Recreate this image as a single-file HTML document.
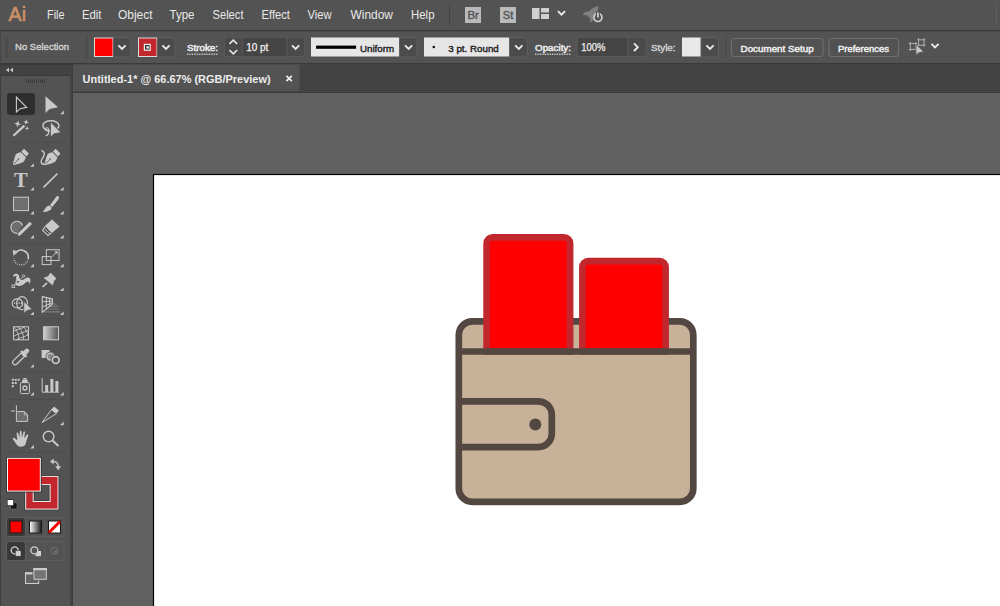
<!DOCTYPE html>
<html>
<head>
<meta charset="utf-8">
<title>Untitled-1* @ 66.67% (RGB/Preview)</title>
<style>
html,body{margin:0;padding:0;}
body{width:1000px;height:606px;overflow:hidden;background:#535353;font-family:"Liberation Sans",sans-serif;position:relative;}
svg{position:absolute;display:block;}
</style>
</head>
<body>
<svg id="artwork" width="1000" height="606" viewBox="0 0 1000 606" style="left:0;top:0">
<rect x="73" y="93" width="927" height="513" fill="#606060"/>
<rect x="153.5" y="174.5" width="900" height="500" fill="#ffffff" stroke="#000" stroke-width="1.2"/>
<rect x="458.8" y="321.4" width="234.5" height="180.4" rx="13.4" fill="#c7b299" stroke="#534741" stroke-width="6.67"/>
<path d="M486.6 351.5 V243.4 a6 6 0 0 1 6 -6 H564.1 a6 6 0 0 1 6 6 V351.5 Z" fill="#ff0000" stroke="#c1272d" stroke-width="6.67"/>
<path d="M582.4 351.5 V267.2 a6 6 0 0 1 6 -6 H659.6 a6 6 0 0 1 6 6 V351.5 Z" fill="#ff0000" stroke="#c1272d" stroke-width="6.67"/>
<path d="M458.7 351.5 H693.3" stroke="#534741" stroke-width="6.67" fill="none"/>
<path d="M458.7 401.3 H538.4 a13.4 13.4 0 0 1 13.4 13.4 V433.7 a13.4 13.4 0 0 1 -13.4 13.4 H458.7" stroke="#534741" stroke-width="6.67" fill="none"/>
<circle cx="535.3" cy="424.5" r="6" fill="#534741"/>
</svg>
<svg id="top" width="1000" height="94" viewBox="0 0 1000 94" style="left:0;top:0" font-family="Liberation Sans, sans-serif">
<defs>
<path id="chev" d="M-3.6 -1.9 L0 1.7 L3.6 -1.9" fill="none" stroke="#ececec" stroke-width="1.8"/>
</defs>
<!-- menu bar -->
<rect x="0" y="0" width="1000" height="30" fill="#535353"/>
<text x="8.6" y="21" font-size="20.5" fill="#ca9067" stroke="#ca9067" stroke-width="0.7" textLength="17.4" lengthAdjust="spacingAndGlyphs">Ai</text>
<g font-size="13" fill="#e8e8e8">
<text x="47" y="19" textLength="17.5" lengthAdjust="spacingAndGlyphs">File</text>
<text x="82" y="19" textLength="19.5" lengthAdjust="spacingAndGlyphs">Edit</text>
<text x="118" y="19" textLength="34.5" lengthAdjust="spacingAndGlyphs">Object</text>
<text x="169.5" y="19" textLength="25" lengthAdjust="spacingAndGlyphs">Type</text>
<text x="212.5" y="19" textLength="31" lengthAdjust="spacingAndGlyphs">Select</text>
<text x="261.5" y="19" textLength="28.5" lengthAdjust="spacingAndGlyphs">Effect</text>
<text x="307.5" y="19" textLength="24" lengthAdjust="spacingAndGlyphs">View</text>
<text x="350.5" y="19" textLength="42.5" lengthAdjust="spacingAndGlyphs">Window</text>
<text x="411" y="19" textLength="23.5" lengthAdjust="spacingAndGlyphs">Help</text>
</g>
<rect x="449" y="5.5" width="1" height="19" fill="#454545"/>
<rect x="996" y="5.5" width="1" height="19" fill="#606060"/>
<!-- Br / St -->
<rect x="465" y="7" width="16" height="16" fill="#bababa"/>
<text x="467.4" y="19.2" font-size="11" fill="#555" stroke="#555" stroke-width="0.4" textLength="11.4" lengthAdjust="spacingAndGlyphs">Br</text>
<rect x="500" y="7" width="16" height="16" fill="#bababa"/>
<text x="502.8" y="19.2" font-size="11" fill="#555" stroke="#555" stroke-width="0.4" textLength="10.4" lengthAdjust="spacingAndGlyphs">St</text>
<!-- layout icon -->
<rect x="532" y="8" width="7.5" height="11" fill="#d0d0d0"/><rect x="541" y="8" width="8" height="4.5" fill="#d0d0d0"/><rect x="541" y="14" width="8" height="5" fill="#d0d0d0"/>
<use href="#chev" x="561.5" y="13"/>
<!-- rocket -->
<g>
<path d="M598.4 6.2 C594.6 6.4 591.2 8.6 589 11.6 L585.2 11.8 L582.4 15 L586.6 15.2 L590.6 19 L589.6 22.8 L593 20.6 L593.4 17.4 C596.4 14.8 598.4 10.6 598.4 6.2 Z" fill="#808080"/>
<circle cx="597.9" cy="17.5" r="4" fill="#535353" stroke="#d2d2d2" stroke-width="1.7"/>
<rect x="596" y="11.4" width="3.8" height="4.4" fill="#535353"/>
<path d="M597.9 12.4 L597.9 17.6" stroke="#d2d2d2" stroke-width="1.7"/>
</g>
<!-- control bar -->
<rect x="0" y="30" width="1000" height="1.5" fill="#3a3a3a"/>
<rect x="0" y="31.5" width="1000" height="31.5" fill="#535353"/>
<rect x="0" y="63" width="1000" height="1.5" fill="#3a3a3a"/>
<rect x="0" y="31" width="1" height="32" fill="#454545"/>
<g fill="#444444"><rect x="5" y="38" width="3" height="1"/><rect x="5" y="40" width="3" height="1"/><rect x="5" y="42" width="3" height="1"/><rect x="5" y="44" width="3" height="1"/><rect x="5" y="46" width="3" height="1"/><rect x="5" y="48" width="3" height="1"/><rect x="5" y="50" width="3" height="1"/><rect x="5" y="52" width="3" height="1"/><rect x="5" y="54" width="3" height="1"/><rect x="5" y="56" width="3" height="1"/></g>
<g font-size="9.6" font-weight="bold" fill="#e2e2e2">
<text x="15" y="49.7" textLength="54" lengthAdjust="spacingAndGlyphs" font-weight="normal" fill="#d8d8d8" stroke="#d8d8d8" stroke-width="0.3">No Selection</text>
<text x="187" y="51.3" textLength="31" lengthAdjust="spacingAndGlyphs" font-weight="normal" fill="#ececec" stroke="#ececec" stroke-width="0.5">Stroke:</text>
<text x="535" y="51.2" textLength="36" lengthAdjust="spacingAndGlyphs" font-weight="normal" fill="#ececec" stroke="#ececec" stroke-width="0.5">Opacity:</text>
<text x="651" y="51.2" textLength="24.5" lengthAdjust="spacingAndGlyphs" font-weight="normal" fill="#d6d6d6" stroke="#d6d6d6" stroke-width="0.35">Style:</text>
</g>
<path d="M187 54.2 L218 54.2 M535 54.2 L571 54.2" stroke="#cfcfcf" stroke-width="1.5" stroke-dasharray="0.9 0.8"/>
<rect x="86.5" y="35" width="1" height="24" fill="#484848"/>
<rect x="725.5" y="35" width="1" height="24" fill="#484848"/>
<!-- fill swatch -->
<rect x="94.5" y="38" width="18.5" height="18.5" fill="#ff0000" stroke="#dcdcdc" stroke-width="1"/>
<path d="M113.5 37.5 L128 37.5 Q131 37.5 131 40.5 L131 54 Q131 57 128 57 L113.5 57 Z" fill="#4b4b4b" stroke="#5f5f5f" stroke-width="1"/>
<use href="#chev" x="122" y="47.2"/>
<!-- stroke swatch -->
<rect x="138.5" y="38" width="18.5" height="18.5" fill="#c1272d" stroke="#dcdcdc" stroke-width="1"/>
<rect x="143.8" y="43.8" width="7" height="7" fill="#f2f2f2"/>
<rect x="145" y="45" width="4.6" height="4.6" fill="#2e2e2e"/>
<rect x="146.4" y="46.2" width="2.4" height="2.4" fill="#f2f2f2"/>
<path d="M157.5 37.5 L172 37.5 Q175 37.5 175 40.5 L175 54 Q175 57 172 57 L157.5 57 Z" fill="#4b4b4b" stroke="#5f5f5f" stroke-width="1"/>
<use href="#chev" x="166" y="47.2"/>
<!-- stroke weight -->
<rect x="224.4" y="37.2" width="80.2" height="19.6" rx="3" fill="#535353" stroke="#5a5a5a" stroke-width="1"/>
<path d="M241.6 37.8 L227.2 37.8 Q225 37.8 225 40 L225 54 Q225 56.1 227.2 56.1 L241.6 56.1 Z" fill="#4a4a4a"/>
<path d="M229.4 43.9 L233.3 40.1 L237.2 43.9 M229.4 50 L233.3 53.8 L237.2 50" fill="none" stroke="#e6e6e6" stroke-width="1.6"/>
<rect x="243.2" y="37.8" width="42.8" height="18.3" fill="#454545"/>
<text x="246.2" y="50.8" font-size="10" fill="#f0f0f0" stroke="#f0f0f0" stroke-width="0.25" textLength="22.2" lengthAdjust="spacingAndGlyphs">10 pt</text>
<path d="M287.7 37.8 L302 37.8 Q304.1 37.8 304.1 40 L304.1 54 Q304.1 56.1 302 56.1 L287.7 56.1 Z" fill="#4a4a4a"/>
<use href="#chev" x="295.6" y="47.2"/>
<!-- profile -->
<rect x="311" y="37.5" width="88.5" height="19" fill="#e6e6e6"/>
<rect x="316.1" y="45.6" width="40" height="3.2" fill="#000"/>
<text x="360" y="51.6" font-size="9.6" fill="#1e1e1e" textLength="34" lengthAdjust="spacingAndGlyphs" stroke="#1e1e1e" stroke-width="0.4">Uniform</text>
<path d="M399.5 37.5 L414 37.5 Q417 37.5 417 40.5 L417 54 Q417 57 414 57 L399.5 57 Z" fill="#4b4b4b" stroke="#5f5f5f" stroke-width="1"/>
<use href="#chev" x="408.6" y="47.2"/>
<!-- brush -->
<rect x="424" y="37.5" width="85.5" height="19" fill="#e6e6e6"/>
<circle cx="433.8" cy="47" r="1.3" fill="#111"/>
<text x="448.3" y="51.6" font-size="9.6" fill="#1e1e1e" textLength="50.5" lengthAdjust="spacingAndGlyphs" stroke="#1e1e1e" stroke-width="0.4">3 pt. Round</text>
<path d="M509.5 37.5 L524.5 37.5 Q527.5 37.5 527.5 40.5 L527.5 54 Q527.5 57 524.5 57 L509.5 57 Z" fill="#4b4b4b" stroke="#5f5f5f" stroke-width="1"/>
<use href="#chev" x="518.8" y="47.2"/>
<!-- opacity -->
<rect x="577" y="37.2" width="69" height="19.6" rx="3" fill="#535353" stroke="#5a5a5a" stroke-width="1"/>
<path d="M627.2 37.8 L580 37.8 Q577.8 37.8 577.8 40 L577.8 54 Q577.8 56.1 580 56.1 L627.2 56.1 Z" fill="#454545"/>
<text x="581.3" y="50.9" font-size="10.4" fill="#f0f0f0" stroke="#f0f0f0" stroke-width="0.25" textLength="24.2" lengthAdjust="spacingAndGlyphs">100%</text>
<path d="M628.8 37.8 L643 37.8 Q645.3 37.8 645.3 40 L645.3 54 Q645.3 56.1 643 56.1 L628.8 56.1 Z" fill="#4a4a4a"/>
<path d="M634 43.4 L637.8 47.2 L634 51" fill="none" stroke="#ececec" stroke-width="1.9"/>
<!-- style -->
<rect x="682" y="37.5" width="19" height="19" fill="#e8e8e8"/>
<path d="M701 37.5 L715.5 37.5 Q718.5 37.5 718.5 40.5 L718.5 54 Q718.5 57 715.5 57 L701 57 Z" fill="#4b4b4b" stroke="#5f5f5f" stroke-width="1"/>
<use href="#chev" x="710" y="47.2"/>
<!-- buttons -->
<rect x="731.5" y="38.5" width="91.5" height="18" rx="3" fill="#525252" stroke="#6e6e6e" stroke-width="1.2"/>
<text x="740.6" y="51.6" font-size="9.6" fill="#f0f0f0" textLength="73" lengthAdjust="spacingAndGlyphs" stroke="#f0f0f0" stroke-width="0.45">Document Setup</text>
<rect x="829" y="38.5" width="69.5" height="18" rx="3" fill="#525252" stroke="#6e6e6e" stroke-width="1.2"/>
<text x="838" y="51.6" font-size="9.6" fill="#f0f0f0" textLength="51" lengthAdjust="spacingAndGlyphs" stroke="#f0f0f0" stroke-width="0.45">Preferences</text>
<!-- align icon -->
<g fill="none" stroke="#b0b0b0" stroke-width="1">
<path d="M910.3 42 L910.3 51 M915.8 42 L915.8 51 M908.8 43.6 L917.2 43.6 M908.8 49.4 L917.2 49.4"/>
<path d="M918.6 38.2 L918.6 46.8 M924 38.2 L924 46.8 M917 39.8 L925.4 39.8 M917 45.2 L925.4 45.2"/>
</g>
<path d="M916 44.4 L916 55.2 L918.9 52.7 L923.8 51.7 Z" fill="#c8c8c8" stroke="#535353" stroke-width="0.8"/>
<use href="#chev" x="935" y="45.8"/>
<!-- tab bar -->
<rect x="73" y="64.5" width="927" height="27" fill="#424242"/>
<rect x="73" y="64.5" width="226.5" height="27" fill="#535353"/>
<rect x="73" y="91.7" width="927" height="1.3" fill="#3b3b3b"/>
<text x="82.6" y="83" font-size="11" font-weight="bold" fill="#ededed" textLength="188" lengthAdjust="spacingAndGlyphs">Untitled-1* @ 66.67% (RGB/Preview)</text>
<path d="M286.4 75.8 L291.8 81.2 M291.8 75.8 L286.4 81.2" stroke="#ededed" stroke-width="1.7"/>
</svg>

<svg id="tools" width="73" height="606" viewBox="0 0 73 606" style="left:0;top:0">
<defs>
<linearGradient id="gr1" x1="0" x2="1" y1="0" y2="0"><stop offset="0" stop-color="#d0d0d0"/><stop offset="1" stop-color="#555"/></linearGradient>
<linearGradient id="gr2" x1="0" x2="1" y1="0" y2="0"><stop offset="0" stop-color="#ffffff"/><stop offset="1" stop-color="#1a1a1a"/></linearGradient>
<path id="fly" d="M0 0 L0 3.6 L-3.6 3.6 Z" fill="#c9c9c9"/>
<g id="pen">
  <path d="M13 164.2 C13 163 15 156 15.8 154.6 C16.6 153.4 19 152.6 20.8 152.3 L25.8 157.3 C25.4 159 24.4 161 23.4 161.8 C22 162.8 16 164.8 14.4 165 C13.4 165.1 13 164.8 13 164.2 Z" fill="#c9c9c9"/>
  <path d="M13.6 164.3 L18.2 159.4" stroke="#535353" stroke-width="0.8" fill="none"/>
  <circle cx="18.5" cy="159.1" r="0.8" fill="#535353"/>
  <path d="M21.4 151.6 L24 148.7 L28.9 153.4 L26.3 156.4 Z" fill="#c9c9c9"/>
</g>
</defs>
<!-- header -->
<rect x="1" y="65" width="69" height="10" fill="#424242"/>
<rect x="0" y="63" width="73" height="2" fill="#3a3a3a"/>
<rect x="1" y="75" width="69" height="1" fill="#3a3a3a"/>
<path d="M9 67.8 L9 72.2 L6 70 Z M13 67.8 L13 72.2 L10 70 Z" fill="#d0d0d0"/>
<g fill="#3d3d3d"><rect x="26" y="79.5" width="1" height="3.5"/><rect x="28" y="79.5" width="1" height="3.5"/><rect x="30" y="79.5" width="1" height="3.5"/><rect x="32" y="79.5" width="1" height="3.5"/><rect x="34" y="79.5" width="1" height="3.5"/><rect x="36" y="79.5" width="1" height="3.5"/><rect x="38" y="79.5" width="1" height="3.5"/><rect x="40" y="79.5" width="1" height="3.5"/><rect x="42" y="79.5" width="1" height="3.5"/><rect x="44" y="79.5" width="1" height="3.5"/></g>
<!-- separators -->
<g fill="#4c4c4c">
<rect x="6" y="142" width="60" height="1"/><rect x="6" y="243" width="60" height="1"/><rect x="6" y="318" width="60" height="1"/><rect x="6" y="371" width="60" height="1"/><rect x="6" y="399" width="60" height="1"/><rect x="6" y="452" width="60" height="1"/>
</g>
<!-- selection tool (active) -->
<rect x="7" y="93" width="28" height="22" rx="3" fill="#2e2e2e"/>
<path d="M16.4 97.2 L16.4 112 L20.2 108.7 L26.6 107.4 Z" fill="none" stroke="#cfcfcf" stroke-width="1.1" stroke-linejoin="miter"/>
<!-- direct selection -->
<path d="M45.5 96.2 L45.5 113 L49.6 108.9 L58 107.3 Z" fill="#c9c9c9"/>
<use href="#fly" x="63.8" y="110.6"/>
<!-- magic wand -->
<path d="M13.4 135.8 L24.4 125.6" stroke="#c9c9c9" stroke-width="2.2" fill="none"/>
<path d="M18.3 120.4 L18.8 123.2 L21.2 124.5 L18.4 125.0 L17.1 127.4 L16.6 124.6 L14.2 123.3 L17.0 122.8 Z" fill="#c9c9c9"/>
<path d="M26.6 119.3 L27.0 121.6 L29.0 122.7 L26.7 123.1 L25.6 125.1 L25.2 122.8 L23.2 121.7 L25.5 121.3 Z" fill="#c9c9c9"/>
<path d="M27.5 126.2 L27.8 127.9 L29.3 128.8 L27.6 129.1 L26.7 130.6 L26.4 128.9 L24.9 128.0 L26.6 127.7 Z" fill="#c9c9c9"/>
<!-- lasso -->
<path d="M50 130.7 C45.5 130.5 42.9 127.8 42.9 125.4 C42.9 122.6 46.5 120.8 50.8 120.8 C55.2 120.8 58.9 122.8 58.9 125.4 C58.9 126.6 58.4 127.6 57.6 128.4" fill="none" stroke="#c9c9c9" stroke-width="1.5"/>
<circle cx="47" cy="129.3" r="1.6" fill="none" stroke="#c9c9c9" stroke-width="1.1"/>
<path d="M48.5 130.4 C49.2 132.8 48.2 135 45.6 135.8" fill="none" stroke="#c9c9c9" stroke-width="1.3"/>
<path d="M50.5 122 L50.5 137.2 L54 133.7 L61 132.6 Z" fill="#c9c9c9" stroke="#535353" stroke-width="0.7"/>
<!-- pen -->
<use href="#pen"/>
<use href="#fly" x="33.9" y="163.2"/>
<!-- curvature -->
<use href="#pen" x="31.6"/>
<path d="M41.4 150.4 C44.8 151.6 44.9 154 43.4 156.6 C41.8 159.2 40.2 161.2 41.5 163 C42.4 164.3 44 164.4 45.2 164" fill="none" stroke="#c9c9c9" stroke-width="1.4"/>
<!-- type -->
<text x="14" y="186.9" font-family="Liberation Serif, serif" font-weight="bold" font-size="21" fill="#c9c9c9" textLength="13.7" lengthAdjust="spacingAndGlyphs">T</text>
<use href="#fly" x="33.9" y="187"/>
<!-- line -->
<path d="M43.5 187.4 L57.4 173.6" stroke="#c9c9c9" stroke-width="1.5"/>
<use href="#fly" x="63.6" y="187"/>
<!-- rectangle -->
<rect x="13.5" y="197.2" width="15" height="13.4" fill="#6e6e6e" stroke="#c9c9c9" stroke-width="1"/>
<use href="#fly" x="33.9" y="210.8"/>
<!-- brush -->
<path d="M58.2 196.2 C59.4 196.6 59.2 198 58.6 199 L52.4 207 L50 205.2 L56 197 C56.6 196.3 57.4 195.9 58.2 196.2 Z" fill="#c9c9c9"/>
<path d="M49.3 205.6 L51.8 207.6 C51.6 210.5 47.5 212.3 42.6 211.8 C45 210.6 45.2 206.2 49.3 205.6 Z" fill="#c9c9c9"/>
<use href="#fly" x="63.6" y="210.8"/>
<!-- shaper -->
<path d="M17.5 233.3 A6 6 0 1 1 22.6 225.5" fill="#6e6e6e" stroke="#c9c9c9" stroke-width="1.1"/>
<path d="M29.8 221.8 L32 224 L20.4 235.2 L17.8 236 L18.3 233 Z" fill="#c9c9c9"/>
<use href="#fly" x="33.9" y="234.8"/>
<!-- eraser -->
<path d="M52 219.4 L59.6 226.5 L51.8 233 L44.8 226 Z" fill="#c9c9c9"/>
<path d="M45 226.5 L42.6 230.4 L48 235.5 L51.4 232.8" fill="none" stroke="#c9c9c9" stroke-width="1.1"/>
<path d="M44.5 228.6 L49.6 233.6" fill="none" stroke="#c9c9c9" stroke-width="0.9"/>
<use href="#fly" x="63.6" y="234.8"/>
<!-- rotate -->
<path d="M15.6 252.6 A7.3 7.3 0 0 1 28.1 259.2" fill="none" stroke="#c9c9c9" stroke-width="1.6"/>
<path d="M12.8 249.9 L18.6 251.4 L13.3 255.8 Z" fill="#c9c9c9"/>
<path d="M27.6 260.8 A7.3 7.3 0 0 1 13.8 258.6" fill="none" stroke="#c9c9c9" stroke-width="1.4" stroke-dasharray="1 1.25"/>
<use href="#fly" x="33.9" y="263.6"/>
<!-- scale -->
<rect x="46.3" y="249.7" width="12.8" height="10.8" fill="none" stroke="#c9c9c9" stroke-width="1"/>
<rect x="42.2" y="256.6" width="8.8" height="8" fill="none" stroke="#c9c9c9" stroke-width="1"/>
<path d="M52.4 256.4 L57 251.8" stroke="#c9c9c9" stroke-width="1"/>
<path d="M54.2 251.2 L57.6 251.2 L57.6 254.6 Z" fill="#c9c9c9"/>
<use href="#fly" x="63.6" y="263.6"/>
<!-- puppet warp -->
<path d="M14 276 C14 274.2 15.4 273.5 16.6 273.7 C18.4 274 19.2 275.6 19.4 277.4 C19.6 279.2 20.4 280.2 22 280 C24 279.6 25.6 277.4 27.8 277.4 C29.8 277.4 30.6 279 30.4 280.8 C30.3 282 30 283.2 29.6 284 C29.2 282.4 28.6 281.2 27.4 281.4 C25.6 281.8 24 284.8 21.4 285.6 C19.6 286.1 17.6 286 16.4 285.2 C14.8 284 15.2 281.6 16.4 280 C16.2 278.6 15.8 277 14 276 Z" fill="#c9c9c9"/>
<path d="M14.2 278.6 L16 276.5" stroke="#535353" stroke-width="1.5" stroke-linecap="round" fill="none"/>
<path d="M14 276 C14 274.2 15.4 273.5 16.6 273.7" stroke="#c9c9c9" stroke-width="1.2" fill="none" transform="translate(-0.4 0.6)"/>
<path d="M13.6 286.2 L18 281.8 L23.5 276.2" stroke="#c9c9c9" stroke-width="0.8" fill="none"/>
<circle cx="18" cy="281.8" r="1.5" fill="#535353" stroke="#c9c9c9" stroke-width="0.9"/>
<circle cx="23.6" cy="276" r="1.2" fill="#535353" stroke="#c9c9c9" stroke-width="0.8"/>
<rect x="12.1" y="285" width="2.6" height="2.6" fill="#535353" stroke="#c9c9c9" stroke-width="0.9"/>
<use href="#fly" x="33.9" y="287.4"/>
<!-- pin -->
<path d="M50.6 273 L56.1 278.5 L53.9 280.7 C53.6 282.2 53.2 283.6 52.6 285.1 L43.9 277.8 C45.4 277.5 46.7 277.2 48 276.5 Z" fill="#c9c9c9" stroke="#c9c9c9" stroke-width="0.5" stroke-linejoin="round"/>
<path d="M47 282.8 L42.5 287" stroke="#c9c9c9" stroke-width="1.7"/>
<use href="#fly" x="63.6" y="287.4"/>
<!-- shape builder -->
<ellipse cx="17.4" cy="303.4" rx="5.3" ry="4.5" fill="none" stroke="#c9c9c9" stroke-width="1.1"/>
<ellipse cx="22.1" cy="303.2" rx="5.4" ry="6.6" fill="none" stroke="#c9c9c9" stroke-width="1.1"/>
<g fill="#c9c9c9"><rect x="14" y="302.4" width="1.1" height="1.6"/><rect x="16.3" y="302.4" width="1.1" height="1.6"/><rect x="18.6" y="302.4" width="1.1" height="1.6"/><rect x="20.9" y="302.4" width="1.1" height="1.6"/></g>
<path d="M23.9 301.4 L23.9 313.2 L27 310.4 L32 309.3 Z" fill="#c9c9c9" stroke="#535353" stroke-width="0.6"/>
<use href="#fly" x="33.9" y="311.4"/>
<!-- perspective grid -->
<path d="M49.6 306.4 L58.2 306.4 M47 309 L59 309 M44 311.8 L60.2 311.8" stroke="#7c7c7c" stroke-width="1.2"/>
<path d="M52.4 304 L56.6 304" stroke="#777" stroke-width="1.1"/>
<path d="M42.2 296.6 L52.4 298.9 L52.4 304 L42.2 312.4 Z" fill="#535353" stroke="#c9c9c9" stroke-width="1.1" stroke-linejoin="round"/>
<path d="M42.2 301.8 L52.4 300.9 M42.2 307.2 L52.4 302.6 M46.3 297.5 L46.3 309 M49.6 298.3 L49.6 306.3" stroke="#c9c9c9" stroke-width="1" fill="none"/>
<use href="#fly" x="63.6" y="311.4"/>
<!-- mesh -->
<rect x="13.5" y="326.8" width="15" height="13" fill="none" stroke="#c9c9c9" stroke-width="1"/>
<path d="M13.5 331.5 C17 328.5 21 329.5 24.5 326.8 M13.5 336.5 C18 333.5 24 332.5 28.5 330 M16.5 339.8 C20 337.5 25 337 28.5 334.5 M17.5 326.8 C21 329 24 334 23.5 339.8 M14 327.5 C17 330 19.5 335 18.5 339.8 M23.5 327 C26 329 27.5 333 28 336" fill="none" stroke="#c9c9c9" stroke-width="0.9"/>
<!-- gradient -->
<rect x="43.5" y="326.8" width="15" height="13" fill="url(#gr1)" stroke="#c9c9c9" stroke-width="1"/>
<!-- eyedropper -->
<path d="M13.5 364.3 C12.1 363.4 12.4 361.6 13.4 360.6 L21.4 352.8 L24.8 356.2 L16.8 364 C15.8 365 14.5 365.1 13.5 364.3 Z" fill="none" stroke="#c9c9c9" stroke-width="1.3"/>
<path d="M20.2 351.8 L25.8 357.4 L27.3 355.9 L21.7 350.3 Z" fill="#c9c9c9"/>
<path d="M23.8 353.8 L26.9 350.9" stroke="#c9c9c9" stroke-width="4.6" stroke-linecap="round"/>
<use href="#fly" x="33.9" y="364"/>
<!-- blend -->
<rect x="41.6" y="350" width="8" height="8" fill="#c9c9c9"/>
<circle cx="50.4" cy="356.6" r="4.9" fill="#535353"/>
<circle cx="50.4" cy="356.6" r="3.5" fill="#8a8a8a" stroke="#c9c9c9" stroke-width="1.4"/>
<circle cx="55.7" cy="360" r="5" fill="#535353"/>
<circle cx="55.7" cy="360" r="3.4" fill="#535353" stroke="#c9c9c9" stroke-width="1.7"/>
<!-- symbol sprayer -->
<rect x="20.4" y="382.6" width="9" height="11" rx="1" fill="none" stroke="#c9c9c9" stroke-width="1"/>
<path d="M22.6 382.4 L22.6 380 L27.2 380 L27.2 382.4 M23.6 379.6 L23.6 378.4 L26.2 378.4 L26.2 379.6" fill="#c9c9c9" stroke="#c9c9c9" stroke-width="0.8"/>
<circle cx="24.9" cy="388" r="2" fill="none" stroke="#c9c9c9" stroke-width="1.3"/>
<g fill="#c9c9c9"><rect x="11.8" y="378.8" width="2" height="2"/><rect x="14.7" y="378.8" width="2" height="2"/><rect x="17.6" y="378.8" width="2" height="2"/><rect x="11.8" y="382" width="2" height="2"/><rect x="14.7" y="382" width="2" height="2"/><rect x="11.8" y="385.2" width="2" height="2"/></g>
<use href="#fly" x="33.9" y="392"/>
<!-- graph -->
<path d="M42.2 378.2 L42.2 392.2 L59 392.2" fill="none" stroke="#c9c9c9" stroke-width="1"/>
<rect x="45.2" y="385" width="3" height="7" fill="#c9c9c9"/><rect x="50.4" y="379" width="3" height="13" fill="#c9c9c9"/><rect x="55.4" y="381" width="3" height="11" fill="#c9c9c9"/>
<use href="#fly" x="63.6" y="392"/>
<!-- artboard -->
<path d="M16.4 411.6 L24.4 411.6 L27.6 414.8 L27.6 421.4 L16.4 421.4 Z" fill="#6e6e6e" stroke="#c9c9c9" stroke-width="1"/>
<path d="M24.4 411.6 L24.4 414.8 L27.6 414.8" fill="none" stroke="#c9c9c9" stroke-width="0.8"/>
<path d="M16.4 405.4 L16.4 411 M10.8 411 L15 411" stroke="#c9c9c9" stroke-width="1"/>
<!-- slice -->
<path d="M42 422.6 L51.4 409.6 L56.4 413.6 Z" fill="none" stroke="#c9c9c9" stroke-width="1"/>
<path d="M51.4 409.6 L54 406.4 L59 410.4 L56.4 413.6 Z" fill="#c9c9c9"/>
<use href="#fly" x="63.6" y="421.6"/>
<!-- hand -->
<path d="M18 446 C16 444 14.6 441.4 13 439.2 C12.4 438 13.6 437.2 14.6 438 L17.4 440.4 L16.6 433.4 C16.5 432.2 18 432 18.3 433.2 L19.4 438 L19.8 431.6 C19.9 430.4 21.5 430.4 21.6 431.6 L21.8 438 L23.4 432.2 C23.8 431 25.2 431.4 25 432.6 L24.2 438.6 L26.6 435 C27.4 434 28.6 434.8 28.2 435.8 C27 438.6 26.4 441.6 25.6 444 C25 445.4 24 446.4 22.4 446.6 C20.6 446.8 19 446.8 18 446 Z" fill="#c9c9c9"/>
<use href="#fly" x="33.9" y="444.8"/>
<!-- zoom -->
<circle cx="48.6" cy="436.6" r="5.3" fill="none" stroke="#c9c9c9" stroke-width="1.4"/>
<path d="M52.6 440.6 L58.4 446" stroke="#c9c9c9" stroke-width="2"/>
<!-- fill/stroke -->
<rect x="24.5" y="475.2" width="34.7" height="35.1" fill="#2f2f2f"/>
<rect x="25.2" y="475.9" width="33.3" height="33.7" fill="#f0f0f0"/>
<rect x="26.2" y="476.9" width="31.3" height="31.7" fill="#c1272d"/>
<rect x="32.7" y="484.1" width="17.9" height="17.9" fill="#f0f0f0"/>
<rect x="33.7" y="485.1" width="15.9" height="15.9" fill="#3a3a3a"/>
<rect x="34.5" y="485.9" width="14.3" height="14.3" fill="#535353"/>
<rect x="6.2" y="457" width="35.4" height="35.4" fill="#2f2f2f"/>
<rect x="7" y="457.8" width="33.8" height="33.8" fill="#f4f4f4"/>
<rect x="8" y="458.8" width="31.8" height="31.8" fill="#ff0000"/>
<!-- swap -->
<path d="M52.6 461.5 C56.6 461.3 58.2 463.2 58.2 467" fill="none" stroke="#c6c6c6" stroke-width="1.5"/>
<path d="M50 461.4 L53.7 458.4 L53.7 464.4 Z M58.2 470.2 L55.2 466.2 L61.2 466.2 Z" fill="#c6c6c6"/>
<!-- default -->
<rect x="10.4" y="502.6" width="6.8" height="6.6" fill="#777"/>
<rect x="10.9" y="503.1" width="5.8" height="5.6" fill="#161616"/>
<rect x="6.9" y="499.3" width="7" height="6.6" fill="#2a2a2a"/>
<rect x="7.6" y="500" width="5.6" height="5.2" fill="#ffffff"/>
<!-- color mode row -->
<rect x="6.5" y="517.5" width="57.5" height="19" rx="2" fill="none" stroke="#5e5e5e" stroke-width="1"/>
<rect x="7" y="518" width="18" height="18" rx="2" fill="#3a3a3a"/>
<path d="M25.5 518 L25.5 536 M45 518 L45 536" stroke="#5e5e5e" stroke-width="1"/>
<rect x="10" y="521" width="12" height="12" fill="#ff0000" stroke="#1a1a1a" stroke-width="1"/>
<rect x="29.5" y="521" width="12" height="12" fill="url(#gr2)" stroke="#1a1a1a" stroke-width="1"/>
<rect x="48.5" y="521" width="12" height="12" fill="#ffffff" stroke="#1a1a1a" stroke-width="1"/>
<path d="M49 532.5 L60 521.5" stroke="#ff0000" stroke-width="3"/>
<!-- draw mode row -->
<rect x="6.5" y="541.5" width="57.5" height="19" rx="2" fill="none" stroke="#5e5e5e" stroke-width="1"/>
<rect x="7" y="542" width="18" height="18" rx="2" fill="#383838"/>
<path d="M25.5 542 L25.5 560 M45 542 L45 560" stroke="#5e5e5e" stroke-width="1"/>
<circle cx="14.7" cy="550.4" r="3.5" fill="#383838" stroke="#d0d0d0" stroke-width="1.4"/>
<rect x="15.4" y="550.8" width="5.6" height="5.4" fill="#d0d0d0" stroke="#383838" stroke-width="0.5"/>
<rect x="35.6" y="551" width="5.4" height="5.2" fill="#d0d0d0"/>
<circle cx="34.4" cy="550.4" r="3.5" fill="#535353" stroke="#d0d0d0" stroke-width="1.4"/>
<circle cx="54.4" cy="550.7" r="3.3" fill="none" stroke="#6c6c6c" stroke-width="1.3"/>
<circle cx="55.4" cy="551.5" r="1.5" fill="#6c6c6c"/>
<!-- screen mode -->
<rect x="25.5" y="572.9" width="13.2" height="10.6" fill="#646464" stroke="#cfcfcf" stroke-width="1"/>
<rect x="25" y="572.4" width="14.2" height="2" fill="#cfcfcf"/>
<rect x="32.6" y="567.4" width="15" height="13" fill="#535353"/>
<rect x="33.9" y="568.7" width="12.4" height="10.6" fill="#747474" stroke="#cfcfcf" stroke-width="1"/>
<rect x="33.4" y="568.2" width="13.4" height="2" fill="#cfcfcf"/>
<!-- borders -->
<rect x="0" y="65" width="1" height="541" fill="#3f3f3f"/>
<rect x="70" y="65" width="1.4" height="541" fill="#444444"/><rect x="71.4" y="65" width="1.6" height="541" fill="#3c3c3c"/>
</svg>

</body>
</html>
